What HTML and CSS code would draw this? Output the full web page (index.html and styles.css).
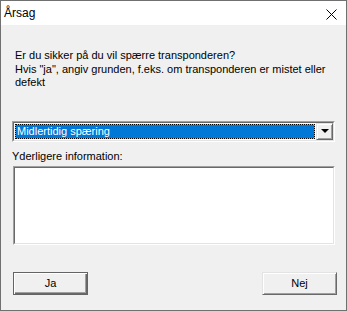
FILE: index.html
```html
<!DOCTYPE html>
<html lang="da">
<head>
    <meta charset="UTF-8">
    <title>Årsag</title>
    <link rel="stylesheet" href="styles.css">
</head>
<body>
    <div class="window">
        <div class="titlebar">
            <span class="title">Årsag</span>
            <svg class="close" width="11" height="11" viewBox="0 0 11 11">
                <line x1="0.5" y1="0.5" x2="10.5" y2="10.5" stroke="#000" stroke-width="1"></line>
                <line x1="10.5" y1="0.5" x2="0.5" y2="10.5" stroke="#000" stroke-width="1"></line>
            </svg>
        </div>

        <div class="content">
            <p class="question">
                Er du sikker på du vil spærre transponderen?<br>
                Hvis "ja", angiv grunden, f.eks. om transponderen er mistet eller<br>
                defekt
            </p>

            <div class="combo">
                <div class="combo-inner">
                    <div class="combo-value">Midlertidig spæring</div>
                    <div class="combo-button"><span class="arrow"></span></div>
                </div>
            </div>

            <label class="field-label">Yderligere information:</label>
            <div class="textbox"><div class="textbox-inner"></div></div>

            <div class="buttons">
                <button class="btn btn-default">Ja</button>
                <button class="btn">Nej</button>
            </div>
        </div>
    </div>
</body>
</html>
```

FILE: styles.css
```css
* {
    margin: 0;
    padding: 0;
    box-sizing: border-box;
}

body {
    background: #f0f0f0;
    font-family: "Liberation Sans", Arial, sans-serif;
    font-size: 11px;
    color: #000;
}

.window {
    width: 347px;
    height: 311px;
    border: 1px solid #707070;
    background: #f0f0f0;
    display: flex;
    flex-direction: column;
}

.titlebar {
    height: 24px;
    background: #fff;
    display: flex;
    align-items: center;
    justify-content: space-between;
    padding: 0 9px 0 3px;
}

.title {
    font-size: 12px;
}

.close {
    display: block;
    margin-top: 2px;
}

.content {
    padding: 24px 9px 0 11px;
    display: flex;
    flex-direction: column;
}

.question {
    margin-left: 3px;
    line-height: 13.5px;
    white-space: nowrap;
}

/* sunken 3D frame, shared by the combo and the text box */
.combo,
.textbox {
    border: 1px solid;
    border-color: #a0a0a0 #fff #fff #a0a0a0;
}

.combo-inner,
.textbox-inner {
    border: 1px solid;
    border-color: #696969 #e3e3e3 #e3e3e3 #696969;
    background: #fff;
}

.combo {
    width: 323px;
    height: 21px;
    margin-top: 31px;
}

.combo-inner {
    height: 100%;
    display: flex;
}

.combo-value {
    flex: 1;
    margin: 1px;
    padding-left: 1px;
    border: 1px dotted #000;
    background: linear-gradient(#0078d7, #0078d7) padding-box, #f7a13a border-box;
    color: #fff;
    line-height: 13px;
    white-space: nowrap;
}

.combo-button {
    width: 17px;
    height: 17px;
    border: 1px solid;
    border-color: #e3e3e3 #696969 #696969 #e3e3e3;
    box-shadow: inset 1px 1px 0 #fff, inset -1px -1px 0 #a0a0a0;
    background: #f0f0f0;
    display: flex;
    align-items: center;
    justify-content: center;
}

.arrow {
    width: 0;
    height: 0;
    border-left: 4px solid transparent;
    border-right: 4px solid transparent;
    border-top: 4px solid #000;
    margin-left: 1px;
}

.field-label {
    margin-top: 8px;
    line-height: 13px;
}

.textbox {
    width: 322px;
    height: 79px;
    margin: 3px 0 0 1px;
}

.textbox-inner {
    height: 100%;
}

.buttons {
    display: flex;
    justify-content: space-between;
    margin: 27px 0 0 1px;
}

.btn {
    width: 75px;
    height: 23px;
    font-family: inherit;
    font-size: 11px;
    color: #000;
    background: #f0f0f0;
    border: 1px solid;
    border-color: #e3e3e3 #696969 #696969 #e3e3e3;
    box-shadow: inset 1px 1px 0 #fff, inset -1px -1px 0 #a0a0a0;
}

.btn-default {
    border-color: #646464;
    box-shadow: inset 1px 1px 0 #fff, inset -1px -1px 0 #696969, inset -2px -2px 0 #a0a0a0;
}
```
